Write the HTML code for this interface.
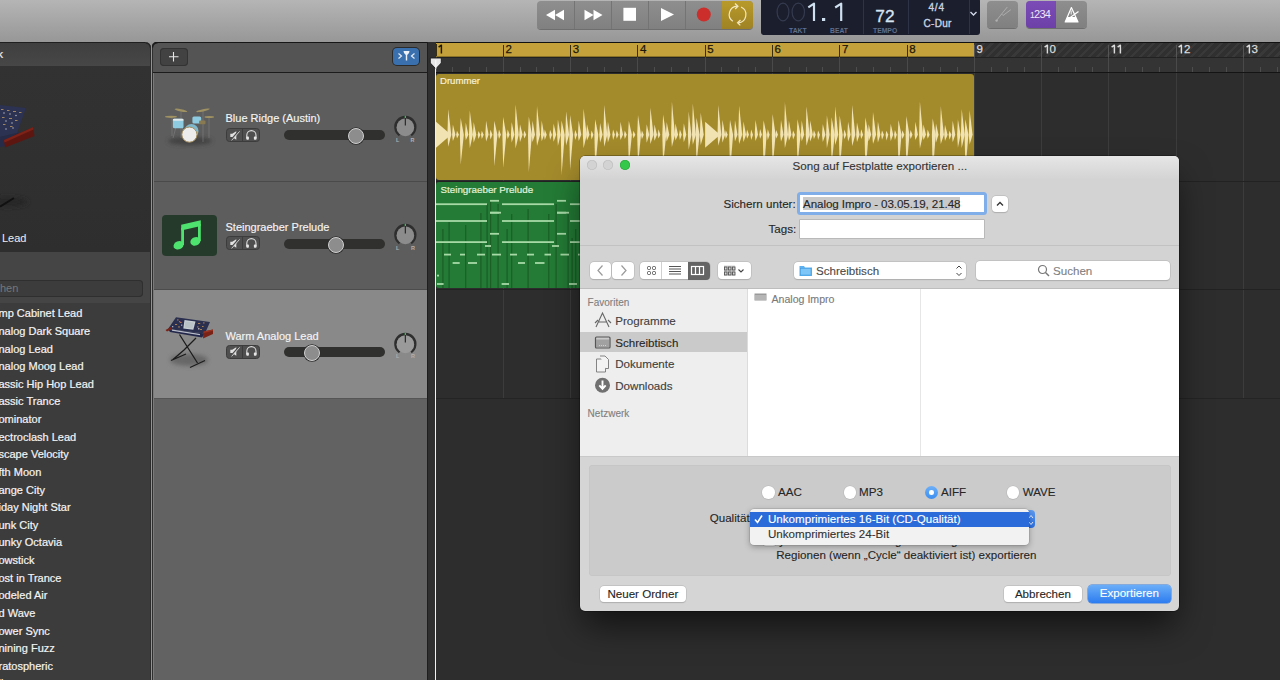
<!DOCTYPE html>
<html><head><meta charset="utf-8">
<style>
*{box-sizing:border-box;margin:0;padding:0}
html,body{width:1280px;height:680px;overflow:hidden;background:#2b2b2b;font-family:"Liberation Sans",sans-serif;position:relative}
.a{position:absolute}
#tb{left:0;top:0;width:1280px;height:42px;background:linear-gradient(#b5b5b5,#979797)}
.tbtn{position:absolute;top:1px;height:28px;background:linear-gradient(#8d8d8d,#7f7f7f);}
.rn{position:absolute;top:42px;font-size:11.5px;line-height:14px;-webkit-text-stroke:0.25px currentColor}
.li{position:absolute;left:-1.5px;font-size:11px;color:#f4f4f4;line-height:13px;white-space:nowrap;-webkit-text-stroke:0.2px #f4f4f4}
.tname{position:absolute;left:225.5px;font-size:11px;color:#f4f4f4;white-space:nowrap;line-height:13px;-webkit-text-stroke:0.15px #f4f4f4}
.ms{position:absolute;left:226px;width:33.5px;height:14px;border:1px solid #3c3c3c;border-radius:3.5px;background:#4f4f4f}
.ms:after{content:"";position:absolute;left:14.8px;top:0;width:1px;height:12px;background:#3c3c3c}
.sl{position:absolute;left:284px;width:100.5px;height:10px;border-radius:5px;background:#30312f}
.th{position:absolute;width:16px;height:16px;border-radius:50%;background:#8d8d8d;border:1.3px solid #d0d0d0;box-shadow:0 0 0 0.8px #2e2e2e;margin-top:0.6px}
.kn{position:absolute;left:394px;width:23px;height:23px}
.lr{position:absolute;font-size:5.5px;color:#b0b0b0;font-weight:bold}
.dt{font-size:11.6px;color:#262626;position:absolute;white-space:nowrap;line-height:14px;-webkit-text-stroke:0.12px currentColor}
.btn{position:absolute;height:17px;border-radius:4px;background:#fff;box-shadow:0 0 0 0.5px #b5b5b5,0 0.5px 1px rgba(0,0,0,.2);font-size:11.6px;color:#262626;text-align:center;line-height:15.6px;-webkit-text-stroke:0.12px currentColor}
.radio{position:absolute;width:12.5px;height:12.5px;border-radius:50%;background:#fff;box-shadow:0 0 0 0.5px #b8b8b8,0 0.5px 1px rgba(0,0,0,.15)}
</style></head><body>

<!-- toolbar -->
<div id="tb" class="a">
  <div class="a" style="left:537px;top:1px;width:216px;height:27.5px;border-radius:4px;background:linear-gradient(#8e8e8e,#808080);box-shadow:0 1px 0 #6e6e6e"></div>
  <div class="a" style="left:574px;top:1px;width:1px;height:27.5px;background:#747474"></div>
  <div class="a" style="left:611px;top:1px;width:1px;height:27.5px;background:#747474"></div>
  <div class="a" style="left:648px;top:1px;width:1px;height:27.5px;background:#747474"></div>
  <div class="a" style="left:685px;top:1px;width:1px;height:27.5px;background:#747474"></div>
  <div class="a" style="left:722px;top:1px;width:31px;height:27.5px;border-radius:0 4px 4px 0;background:linear-gradient(#b89a2a,#9f8224)"></div>
  <svg class="a" style="left:0;top:0" width="1280" height="42">
    <polygon points="546,15 555,9.7 555,20.3" fill="#fff"/><polygon points="555,15 564,9.7 564,20.3" fill="#fff"/>
    <polygon points="584.5,9.7 593.5,15 584.5,20.3" fill="#fff"/><polygon points="593.5,9.7 602.5,15 593.5,20.3" fill="#fff"/>
    <rect x="623.4" y="7.8" width="12.6" height="13" fill="#fff"/>
    <polygon points="661,8 674,14.5 661,21" fill="#fff"/>
    <circle cx="703.8" cy="14.5" r="7" fill="#cc2f2b"/>
    <path d="M732.8,21.3 A8.3,8.3 0 0 1 737.2,6.2" stroke="#f3e8c0" stroke-width="1.2" fill="none"/>
    <path d="M735,3.6 L737.9,6.2 L735.2,9" stroke="#f3e8c0" stroke-width="1.3" fill="none"/>
    <path d="M741.1,7.0 A8.3,8.3 0 0 1 738.2,22.8" stroke="#f3e8c0" stroke-width="1.2" fill="none"/>
    <path d="M740.5,20.1 L737.6,22.8 L740.3,25.4" stroke="#f3e8c0" stroke-width="1.3" fill="none"/>
  </svg>
  <!-- LCD -->
  <div class="a" style="left:761px;top:-2px;width:218.5px;height:36.7px;border-radius:3px;background:#1b1e2c"></div>
  <div class="a" style="left:862.5px;top:0;width:1px;height:34px;background:#2e3448"></div>
  <div class="a" style="left:907.5px;top:0;width:1px;height:34px;background:#2e3448"></div>
  <div class="a" style="left:968.5px;top:0;width:1px;height:34px;background:#2e3448"></div>
  <svg class="a" style="left:760px;top:0" width="100" height="36">
    <ellipse cx="23" cy="12" rx="5.9" ry="8.8" fill="none" stroke="#353b4f" stroke-width="1.2"/>
    <ellipse cx="38.3" cy="12" rx="6.2" ry="8.8" fill="none" stroke="#353b4f" stroke-width="1.2"/>
    <path d="M48.3,7.3 L54,3.6 V21" fill="none" stroke="#cfe0f0" stroke-width="2.2" stroke-linejoin="round"/>
    <rect x="62" y="18" width="3.2" height="3" fill="#cfe0f0"/>
    <path d="M75.2,7.5 L81.2,3.6 V21" fill="none" stroke="#cfe0f0" stroke-width="2.2" stroke-linejoin="round"/>
  </svg>
  <div class="a" style="left:789px;top:27px;font-size:6.8px;font-weight:bold;color:#5f6f8e;line-height:7px">TAKT</div>
  <div class="a" style="left:830px;top:27px;font-size:6.8px;font-weight:bold;color:#5f6f8e;line-height:7px">BEAT</div>
  <div class="a" style="left:873px;top:27px;font-size:6.8px;font-weight:bold;color:#5f6f8e;line-height:7px">TEMPO</div>
  <div class="a" style="left:875.3px;top:6px;font-size:17.3px;color:#d6e4f2;line-height:20px;-webkit-text-stroke:0.3px #d6e4f2">72</div>
  <div class="a" style="left:928.5px;top:1.5px;font-size:10px;letter-spacing:0.8px;color:#c8d4e2;line-height:12px;-webkit-text-stroke:0.35px #c8d4e2">4/4</div>
  <div class="a" style="left:923.5px;top:17.5px;font-size:10px;letter-spacing:0.3px;color:#c8d4e2;line-height:12px;-webkit-text-stroke:0.35px #c8d4e2">C-Dur</div>
  <svg class="a" style="left:968px;top:10px" width="12" height="8"><path d="M2.5,2 L5.5,5 L8.5,2" stroke="#d0d8e8" stroke-width="1.4" fill="none"/></svg>
  <!-- tuner -->
  <div class="a" style="left:987.3px;top:1px;width:30.7px;height:27px;border-radius:4px;background:linear-gradient(#8e8e8e,#808080);box-shadow:0 1px 0 #6e6e6e"></div>
  <svg class="a" style="left:980px;top:0px" width="40" height="28">
    <path d="M16.4,20.6 L21.6,14 L27.3,7 M21.6,14 L23,15.5 L30.8,9.7" stroke="#b0b0b0" stroke-width="0.9" fill="none"/><circle cx="16.6" cy="20.6" r="1.2" fill="#b0b0b0"/>
  </svg>
  <div class="a" style="left:1026px;top:1px;width:60.8px;height:27px;border-radius:4px;background:linear-gradient(#8e8e8e,#808080);box-shadow:0 1px 0 #6e6e6e"></div>
  <div class="a" style="left:1026px;top:1px;width:30px;height:27px;border-radius:4px 0 0 4px;background:linear-gradient(#7b4cb6,#6d40a8)"></div>
  <div class="a" style="left:1030px;top:8px;font-size:11px;color:#efe6f8;line-height:12px;letter-spacing:-0.7px"><span style="font-size:8.5px">1</span>234</div>
  <svg class="a" style="left:1056px;top:0px" width="31" height="28">
    <path d="M15.4,7.5 L9.2,22 H22 Z" fill="none" stroke="#fff" stroke-width="1.2" stroke-linejoin="round"/>
    <polygon points="11.3,17 19.9,17 22,22 9.2,22" fill="#fff"/>
    <path d="M15.2,10.5 V14.5" stroke="#fff" stroke-width="0.9"/>
    <path d="M13.5,18 L22.5,11.5" stroke="#fff" stroke-width="1.2"/>
  </svg>
</div>

<!-- left library panel -->
<div class="a" style="left:0;top:42px;width:150.5px;height:638px;background:#3d3d3d;border-top:1px solid #1f1f1f"></div>
<div class="a" style="left:0;top:43px;width:149.7px;height:24px;background:linear-gradient(#3f3f3f,#474747);border-bottom:1.2px solid #2a2a2a;border-radius:0 4px 0 0"></div>
<div class="a" style="left:-2.6px;top:47.5px;font-size:11px;color:#eee;line-height:13px;-webkit-text-stroke:0.2px #eee">k</div>
<div class="a" style="left:0;top:66px;width:150px;height:186px;background:linear-gradient(#323232,#2e2e2e)"></div>
<svg class="a" style="left:0;top:90px" width="60" height="130">
  <polygon points="0,15 26,18 17,43 0,47" fill="#2b3252"/>
  <g fill="#b89460" opacity=".85"><rect x="1" y="19" width="2.5" height="1"/><rect x="7" y="20" width="2.5" height="1"/><rect x="13" y="21" width="3" height="1"/><rect x="19" y="22" width="2.5" height="1"/><rect x="2" y="27" width="2.5" height="1"/><rect x="9" y="28" width="3" height="1"/><rect x="15" y="30" width="2.5" height="1"/><rect x="3" y="34" width="2.5" height="1"/><rect x="10" y="36" width="2.5" height="1"/></g>
  <g fill="#c8c8d0" opacity=".8"><circle cx="4" cy="23" r="0.8"/><circle cx="10" cy="24" r="0.8"/><circle cx="16" cy="25.5" r="0.8"/><circle cx="6" cy="31" r="0.8"/><circle cx="12" cy="33" r="0.8"/><circle cx="6" cy="39" r="0.8"/><circle cx="13" cy="38" r="0.8"/></g>
  <polygon points="0,47 17,43 22,40 6,56 0,57" fill="#262c48"/>
  <polygon points="4,50 33,37.3 34.5,46 5,57.4" fill="#5e1610"/>
  <polygon points="4,50 33,37.3 33.5,39.5 4.5,52.5" fill="#7e2218"/>
  <ellipse cx="8" cy="112" rx="20" ry="5" fill="#262626" filter="url(#bl)"/>
  <path d="M0,116.6 L14,108" stroke="#111" stroke-width="2"/>
</svg>
<div class="a" style="left:2px;top:232px;font-size:11px;color:#eee;line-height:13px">Lead</div>
<div class="a" style="left:0;top:252px;width:150px;height:51px;background:#454545"></div>
<div class="a" style="left:-6px;top:279.6px;width:148.6px;height:17px;border-radius:4px;background:#3c3c3c;box-shadow:inset 0 0 0 1px #2f2f2f"></div>
<div class="a" style="left:0;top:281.5px;font-size:11px;color:#777;line-height:13px">hen</div>
<div class="a" style="left:0;top:303px;width:150px;height:377px;background:#3c3c3c"></div>
<div class="li" style="top:307.3px">mp Cabinet Lead</div><div class="li" style="top:324.9px">nalog Dark Square</div><div class="li" style="top:342.5px">nalog Lead</div><div class="li" style="top:360.2px">nalog Moog Lead</div><div class="li" style="top:377.8px">assic Hip Hop Lead</div><div class="li" style="top:395.4px">assic Trance</div><div class="li" style="top:413.0px">ominator</div><div class="li" style="top:430.6px">ectroclash Lead</div><div class="li" style="top:448.3px">scape Velocity</div><div class="li" style="top:465.9px">fth Moon</div><div class="li" style="top:483.5px">ange City</div><div class="li" style="top:501.1px">iday Night Star</div><div class="li" style="top:518.7px">unk City</div><div class="li" style="top:536.4px">unky Octavia</div><div class="li" style="top:554.0px">owstick</div><div class="li" style="top:571.6px">ost in Trance</div><div class="li" style="top:589.2px">odeled Air</div><div class="li" style="top:606.8px">d Wave</div><div class="li" style="top:624.5px">ower Sync</div><div class="li" style="top:642.1px">nining Fuzz</div><div class="li" style="top:659.7px">ratospheric</div><div class="li" style="top:677.3px">ll</div>
<div class="a" style="left:149.7px;top:42px;width:1.1px;height:638px;background:#2c2c2c"></div><div class="a" style="left:150.8px;top:42px;width:1.3px;height:638px;background:#929292"></div><div class="a" style="left:152.1px;top:42px;width:0.9px;height:638px;background:#2f2f2f"></div>

<svg class="a" style="left:0;top:0;z-index:5" width="170" height="60">
  <path d="M145.7,41.5 H151 V47.5 A5,5 0 0 0 145.7,42.5 Z" fill="#979797"/>
  <path d="M145.7,43 A4.3,4.3 0 0 1 150.2,47.5" stroke="#262626" stroke-width="1.3" fill="none"/>
  <path d="M151.8,41.5 H157.6 A5,5 0 0 0 151.8,47.5 Z" fill="#979797"/>
  <path d="M152.6,47.5 A4.6,4.6 0 0 1 157.6,42.9" stroke="#1a1a1a" stroke-width="1.3" fill="none"/>
</svg>
<!-- track header panel -->
<div class="a" style="left:153px;top:42px;width:274px;height:638px;background:#626262"></div>
<div class="a" style="left:153px;top:42px;width:274px;height:31px;background:#545454;border-top:1.5px solid #161616;border-bottom:1.5px solid #1c1c1c;border-radius:3px 0 0 0"></div>
<div class="a" style="left:160px;top:48px;width:27.5px;height:17.6px;border-radius:4px;background:#424242;box-shadow:inset 0 0 0 1px #333"></div>
<svg class="a" style="left:160px;top:48px" width="28" height="18"><path d="M13.5,4 V13.5 M9,8.7 H18.5" stroke="#e6e6e6" stroke-width="1.1"/></svg>
<div class="a" style="left:392.8px;top:48.4px;width:26.2px;height:16.6px;border-radius:4px;background:#3a70ad;box-shadow:0 0 0 1px #2b2b2b"></div>
<svg class="a" style="left:392.8px;top:48.4px" width="27" height="17">
  <path d="M5.5,5.5 L8.5,8 L5.5,10.5" stroke="#e6ecf5" stroke-width="1.2" fill="none"/>
  <path d="M21.5,5.5 L18.5,8 L21.5,10.5" stroke="#e6ecf5" stroke-width="1.2" fill="none"/>
  <polygon points="10.5,3 16.5,3 16,5 14.2,7 14.2,12.5 12.8,12.5 12.8,7 11,5" fill="#eef2f8"/>
</svg>
<!-- track 1 -->
<div class="a" style="left:153px;top:73px;width:274px;height:108px;background:#5d5d5d"></div>
<div class="a" style="left:153px;top:181px;width:274px;height:1px;background:#4a4a4a"></div>
<!-- track 2 -->
<div class="a" style="left:153px;top:182px;width:274px;height:107px;background:#5d5d5d"></div>
<div class="a" style="left:153px;top:288.5px;width:274px;height:1px;background:#4c4c4c"></div>
<!-- track 3 selected -->
<div class="a" style="left:153px;top:289.5px;width:274px;height:108px;background:#898989"></div>
<div class="a" style="left:153px;top:397.5px;width:274px;height:1.2px;background:#555"></div>
<div class="a" style="left:153px;top:73px;width:1px;height:607px;background:#7a7a7a"></div>

<!-- drums icon -->
<svg class="a" style="left:160px;top:100px" width="60" height="50">
  <defs><filter id="bl" x="-50%" y="-50%" width="200%" height="200%"><feGaussianBlur stdDeviation="2"/></filter></defs>
  <ellipse cx="30" cy="41" rx="22" ry="4" fill="#3a3a3a" filter="url(#bl)" opacity=".8"/>
  <g stroke="#858585" stroke-width="0.55"><path d="M21,10 V38 M43,10 V42 M49,17 V38 M12,17 V36 M16,27 L13,38 M22,27 L26,39"/></g>
  <ellipse cx="21" cy="10.3" rx="6.5" ry="1.15" fill="#9f9162" transform="rotate(12 21 10.3)"/>
  <ellipse cx="43" cy="10.3" rx="7" ry="1.15" fill="#9f9162" transform="rotate(-12 43 10.3)"/>
  <ellipse cx="11" cy="16.8" rx="6" ry="1.1" fill="#9f9162"/>
  <ellipse cx="49.3" cy="17" rx="4.8" ry="1.05" fill="#9f9162"/>
  <rect x="12.9" y="18.7" width="10.6" height="9.5" rx="1.5" fill="#8ecbe0"/>
  <rect x="12.9" y="18.7" width="10.6" height="2" rx="1" fill="#dfe8ea"/>
  <rect x="32.4" y="16.5" width="8.8" height="7" rx="1.5" fill="#8ecbe0"/>
  <rect x="39" y="20.5" width="6.5" height="3.8" rx="1" fill="#8a7a52"/>
  <circle cx="31.5" cy="31" r="7" fill="#7fb8cc"/>
  <circle cx="29.4" cy="34.6" r="7.6" fill="#ececec" stroke="#a08a5a" stroke-width="1"/>
</svg>
<div class="tname" style="top:112px">Blue Ridge (Austin)</div>
<div class="ms" style="top:128.2px"></div>
<div class="sl" style="top:130px"></div>
<div class="th" style="left:348px;top:127.4px"></div>
<svg class="a" style="left:390px;top:109.90px" width="32" height="32"><g transform="translate(15.35,17)">
<path d="M-5.68,8.11 A9.9,9.9 0 1 1 5.68,8.11" fill="none" stroke="#2e2e2e" stroke-width="2.5"/>
<circle cx="0" cy="0.4" r="8.8" fill="#8c8c8c"/>
<path d="M0,-1.4 V-9" stroke="#2a2a2a" stroke-width="1.2"/>
<path d="M0,-9 V-11.2" stroke="#3bbf55" stroke-width="1.3"/></g></svg>
<div class="lr" style="left:396px;top:136.5px">L</div><div class="lr" style="left:410.5px;top:136.5px">R</div>

<!-- note icon -->
<div class="a" style="left:162px;top:215.2px;width:54.7px;height:40.4px;border-radius:4px;background:#253a2b"></div>
<svg class="a" style="left:162px;top:215px" width="55" height="41">
  <path d="M20.6,13 V30 M37.4,9 V26" stroke="#4ee36e" stroke-width="2.8"/>
  <polygon points="19.2,9.8 38.8,5.3 38.8,11 19.2,15.5" fill="#4ee36e"/>
  <ellipse cx="16.6" cy="30.2" rx="5.2" ry="4.1" fill="#4ee36e" transform="rotate(-22 16.6 30.2)"/>
  <ellipse cx="33.4" cy="26.4" rx="5.2" ry="4.1" fill="#4ee36e" transform="rotate(-22 33.4 26.4)"/>
</svg>
<div class="tname" style="top:221px">Steingraeber Prelude</div>
<div class="ms" style="top:236.4px"></div>
<div class="sl" style="top:238.5px"></div>
<div class="th" style="left:328px;top:236px"></div>
<svg class="a" style="left:390px;top:218.40px" width="32" height="32"><g transform="translate(15.35,17)">
<path d="M-5.68,8.11 A9.9,9.9 0 1 1 5.68,8.11" fill="none" stroke="#2e2e2e" stroke-width="2.5"/>
<circle cx="0" cy="0.4" r="8.8" fill="#8c8c8c"/>
<path d="M0,-1.4 V-9" stroke="#2a2a2a" stroke-width="1.2"/>
<path d="M0,-9 V-11.2" stroke="#3bbf55" stroke-width="1.3"/></g></svg>
<div class="lr" style="left:396px;top:245px">L</div><div class="lr" style="left:411px;top:245px">R</div>

<!-- keyboard icon -->
<svg class="a" style="left:160px;top:310px" width="60" height="62">
  <ellipse cx="29" cy="50" rx="19" ry="6" fill="#5a5a5a" filter="url(#bl)" opacity=".7"/>
  <g stroke="#1c1c1c" stroke-width="1.3" fill="none"><path d="M19.5,24.5 L37.5,53 M36,28 L24,40 L13,49.5 M11,50.5 L26,44 M30,57.5 L45,50.5"/></g>
  <polygon points="16,7.2 50,12 45,23.5 8,19" fill="#2a2f50"/>
  <polygon points="8,19 45,23.5 42,27.5 10,22" fill="#23284a"/>
  <path d="M12,20.2 L40,24.6" stroke="#b8bcc8" stroke-width="1.2"/>
  <polygon points="24.5,10 35.5,11.5 33.3,19.8 23.3,18.4" fill="#c9d0d4"/>
  <polygon points="25.5,11.5 34,12.6 32.5,18.5 24.5,17.4" fill="#aab4b8" opacity=".5"/>
  <g fill="#b88a50"><rect x="17" y="9.5" width="1.6" height="0.9"/><rect x="20" y="12" width="1.6" height="0.9"/><rect x="38" y="13" width="2.2" height="0.9"/><rect x="42" y="16" width="1.6" height="0.9"/><rect x="15" y="14" width="2.2" height="0.9"/><rect x="43" y="12.5" width="1.6" height="0.9"/><rect x="18" y="16.5" width="2" height="0.9"/><rect x="40" y="19" width="2" height="0.9"/><rect x="37" y="16.5" width="1.6" height="0.9"/></g>
  <g fill="#c8c8d0" opacity=".8"><rect x="38" y="18" width="1.5" height="1.5"/><rect x="12" y="16" width="1.3" height="1.3"/><rect x="21" y="14.5" width="1.3" height="1.3"/></g>
  <rect x="19" y="11" width="1.3" height="1.3" fill="#d84a6a"/>
  <polygon points="43.5,21.5 53,19.5 53,24 43,28.5" fill="#7a2216"/>
  <polygon points="43.5,21.5 53,19.5 53,20.8 43.5,23" fill="#9a3424"/>
  <polygon points="5.5,20 11,17 12,19 7,21.5" fill="#7a2216"/>
</svg>
<div class="tname" style="top:329.5px">Warm Analog Lead</div>
<div class="ms" style="top:344.5px"></div>
<div class="sl" style="top:346.5px"></div>
<div class="th" style="left:304px;top:344px"></div>
<svg class="a" style="left:390px;top:326.80px" width="32" height="32"><g transform="translate(15.35,17)">
<path d="M-5.68,8.11 A9.9,9.9 0 1 1 5.68,8.11" fill="none" stroke="#2e2e2e" stroke-width="2.5"/>
<circle cx="0" cy="0.4" r="8.8" fill="#9a9a9a"/>
<path d="M0,-1.4 V-9" stroke="#2a2a2a" stroke-width="1.2"/>
<path d="M0,-9 V-11.2" stroke="#3bbf55" stroke-width="1.3"/></g></svg>
<div class="lr" style="left:396px;top:353px">L</div><div class="lr" style="left:411px;top:353px">R</div>

<!-- mute/solo glyphs -->
<svg class="a" style="left:225px;top:128px" width="36" height="16">
  <path d="M5.3,5.8 H7.2 L11.3,3.2 V11.8 L7.2,9 H5.3 Z" fill="#e2e2e2"/><path d="M5.6,12.2 L13.6,3.2" stroke="#4e4e4e" stroke-width="1.5"/><path d="M6.6,12.4 L14.6,3.4" stroke="#d8d8d8" stroke-width="0.9"/>
  <path d="M21.8,10.5 V7.2 A4.6,4.6 0 0 1 31,7.2 V10.5" stroke="#dcdcdc" stroke-width="1.1" fill="none"/><rect x="21.3" y="8.6" width="2.6" height="3.2" rx="0.8" fill="#e6e6e6"/><rect x="28.9" y="8.6" width="2.6" height="3.2" rx="0.8" fill="#e6e6e6"/>
</svg>
<svg class="a" style="left:225px;top:236px" width="36" height="16">
  <path d="M5.3,5.8 H7.2 L11.3,3.2 V11.8 L7.2,9 H5.3 Z" fill="#e2e2e2"/><path d="M5.6,12.2 L13.6,3.2" stroke="#4e4e4e" stroke-width="1.5"/><path d="M6.6,12.4 L14.6,3.4" stroke="#d8d8d8" stroke-width="0.9"/>
  <path d="M21.8,10.5 V7.2 A4.6,4.6 0 0 1 31,7.2 V10.5" stroke="#dcdcdc" stroke-width="1.1" fill="none"/><rect x="21.3" y="8.6" width="2.6" height="3.2" rx="0.8" fill="#e6e6e6"/><rect x="28.9" y="8.6" width="2.6" height="3.2" rx="0.8" fill="#e6e6e6"/>
</svg>
<svg class="a" style="left:225px;top:344px" width="36" height="16">
  <path d="M5.3,5.8 H7.2 L11.3,3.2 V11.8 L7.2,9 H5.3 Z" fill="#e2e2e2"/><path d="M5.6,12.2 L13.6,3.2" stroke="#4e4e4e" stroke-width="1.5"/><path d="M6.6,12.4 L14.6,3.4" stroke="#d8d8d8" stroke-width="0.9"/>
  <path d="M21.8,10.5 V7.2 A4.6,4.6 0 0 1 31,7.2 V10.5" stroke="#dcdcdc" stroke-width="1.1" fill="none"/><rect x="21.3" y="8.6" width="2.6" height="3.2" rx="0.8" fill="#e6e6e6"/><rect x="28.9" y="8.6" width="2.6" height="3.2" rx="0.8" fill="#e6e6e6"/>
</svg>

<!-- strip -->
<div class="a" style="left:427px;top:42px;width:9px;height:638px;background:#2f2f2f;border-left:1px solid #1e1e1e"></div>

<!-- ruler -->
<div class="a" style="left:436px;top:42px;width:844px;height:31px;background:#343434;border-top:1px solid #111"></div>
<div class="a" style="left:974px;top:43px;width:306px;height:14px;background:repeating-linear-gradient(135deg,#393939 0 2.2px,#303030 2.2px 6px)"></div>
<div class="a" style="left:436px;top:43px;width:538px;height:14px;background:#c4a13b;border-bottom:1px solid #8a7228"></div>
<div class="a" style="left:436px;top:57px;width:844px;height:1px;background:#222"></div>
<div class="rn" style="left:438.2px;color:#1c180a"><svg width="5.2" height="10" style="vertical-align:-1px;margin-right:0.6px"><path d="M0.6,3.2 L3.4,1.2 V9.4" stroke="#1c180a" stroke-width="1.45" fill="none" stroke-linejoin="round"/></svg></div><div style="position:absolute;left:435.5px;top:44px;width:1px;height:12px;background:#3a3010"></div><div style="position:absolute;left:435.5px;top:57px;width:1px;height:15px;background:#4a4a4a"></div><div style="position:absolute;left:452.3px;top:66.5px;width:1px;height:5px;background:#4d4d4d"></div><div style="position:absolute;left:469.1px;top:66.5px;width:1px;height:5px;background:#4d4d4d"></div><div style="position:absolute;left:486.0px;top:66.5px;width:1px;height:5px;background:#4d4d4d"></div><div class="rn" style="left:505.5px;color:#1c180a">2</div><div style="position:absolute;left:502.8px;top:45px;width:1px;height:12px;background:#3a3010"></div><div style="position:absolute;left:502.8px;top:57px;width:1px;height:15px;background:#4a4a4a"></div><div style="position:absolute;left:519.6px;top:66.5px;width:1px;height:5px;background:#4d4d4d"></div><div style="position:absolute;left:536.4px;top:66.5px;width:1px;height:5px;background:#4d4d4d"></div><div style="position:absolute;left:553.2px;top:66.5px;width:1px;height:5px;background:#4d4d4d"></div><div class="rn" style="left:572.8px;color:#1c180a">3</div><div style="position:absolute;left:570.1px;top:45px;width:1px;height:12px;background:#3a3010"></div><div style="position:absolute;left:570.1px;top:57px;width:1px;height:15px;background:#4a4a4a"></div><div style="position:absolute;left:586.9px;top:66.5px;width:1px;height:5px;background:#4d4d4d"></div><div style="position:absolute;left:603.7px;top:66.5px;width:1px;height:5px;background:#4d4d4d"></div><div style="position:absolute;left:620.5px;top:66.5px;width:1px;height:5px;background:#4d4d4d"></div><div class="rn" style="left:640.0px;color:#1c180a">4</div><div style="position:absolute;left:637.3px;top:45px;width:1px;height:12px;background:#3a3010"></div><div style="position:absolute;left:637.3px;top:57px;width:1px;height:15px;background:#4a4a4a"></div><div style="position:absolute;left:654.2px;top:66.5px;width:1px;height:5px;background:#4d4d4d"></div><div style="position:absolute;left:671.0px;top:66.5px;width:1px;height:5px;background:#4d4d4d"></div><div style="position:absolute;left:687.8px;top:66.5px;width:1px;height:5px;background:#4d4d4d"></div><div class="rn" style="left:707.3px;color:#1c180a">5</div><div style="position:absolute;left:704.6px;top:45px;width:1px;height:12px;background:#3a3010"></div><div style="position:absolute;left:704.6px;top:57px;width:1px;height:15px;background:#4a4a4a"></div><div style="position:absolute;left:721.4px;top:66.5px;width:1px;height:5px;background:#4d4d4d"></div><div style="position:absolute;left:738.3px;top:66.5px;width:1px;height:5px;background:#4d4d4d"></div><div style="position:absolute;left:755.1px;top:66.5px;width:1px;height:5px;background:#4d4d4d"></div><div class="rn" style="left:774.6px;color:#1c180a">6</div><div style="position:absolute;left:771.9px;top:45px;width:1px;height:12px;background:#3a3010"></div><div style="position:absolute;left:771.9px;top:57px;width:1px;height:15px;background:#4a4a4a"></div><div style="position:absolute;left:788.7px;top:66.5px;width:1px;height:5px;background:#4d4d4d"></div><div style="position:absolute;left:805.5px;top:66.5px;width:1px;height:5px;background:#4d4d4d"></div><div style="position:absolute;left:822.4px;top:66.5px;width:1px;height:5px;background:#4d4d4d"></div><div class="rn" style="left:841.9px;color:#1c180a">7</div><div style="position:absolute;left:839.2px;top:45px;width:1px;height:12px;background:#3a3010"></div><div style="position:absolute;left:839.2px;top:57px;width:1px;height:15px;background:#4a4a4a"></div><div style="position:absolute;left:856.0px;top:66.5px;width:1px;height:5px;background:#4d4d4d"></div><div style="position:absolute;left:872.8px;top:66.5px;width:1px;height:5px;background:#4d4d4d"></div><div style="position:absolute;left:889.6px;top:66.5px;width:1px;height:5px;background:#4d4d4d"></div><div class="rn" style="left:909.2px;color:#1c180a">8</div><div style="position:absolute;left:906.5px;top:45px;width:1px;height:12px;background:#3a3010"></div><div style="position:absolute;left:906.5px;top:57px;width:1px;height:15px;background:#4a4a4a"></div><div style="position:absolute;left:923.3px;top:66.5px;width:1px;height:5px;background:#4d4d4d"></div><div style="position:absolute;left:940.1px;top:66.5px;width:1px;height:5px;background:#4d4d4d"></div><div style="position:absolute;left:956.9px;top:66.5px;width:1px;height:5px;background:#4d4d4d"></div><div class="rn" style="left:976.4px;color:#dcdcdc">9</div><div style="position:absolute;left:973.7px;top:45px;width:1px;height:12px;background:#555"></div><div style="position:absolute;left:973.7px;top:57px;width:1px;height:15px;background:#4a4a4a"></div><div style="position:absolute;left:990.6px;top:66.5px;width:1px;height:5px;background:#4d4d4d"></div><div style="position:absolute;left:1007.4px;top:66.5px;width:1px;height:5px;background:#4d4d4d"></div><div style="position:absolute;left:1024.2px;top:66.5px;width:1px;height:5px;background:#4d4d4d"></div><div class="rn" style="left:1043.7px;color:#dcdcdc"><svg width="5.2" height="10" style="vertical-align:-1px;margin-right:0.6px"><path d="M0.6,3.2 L3.4,1.2 V9.4" stroke="#dcdcdc" stroke-width="1.45" fill="none" stroke-linejoin="round"/></svg>0</div><div style="position:absolute;left:1041.0px;top:45px;width:1px;height:12px;background:#555"></div><div style="position:absolute;left:1041.0px;top:57px;width:1px;height:15px;background:#4a4a4a"></div><div style="position:absolute;left:1057.8px;top:66.5px;width:1px;height:5px;background:#4d4d4d"></div><div style="position:absolute;left:1074.7px;top:66.5px;width:1px;height:5px;background:#4d4d4d"></div><div style="position:absolute;left:1091.5px;top:66.5px;width:1px;height:5px;background:#4d4d4d"></div><div class="rn" style="left:1111.0px;color:#dcdcdc"><svg width="5.2" height="10" style="vertical-align:-1px;margin-right:0.6px"><path d="M0.6,3.2 L3.4,1.2 V9.4" stroke="#dcdcdc" stroke-width="1.45" fill="none" stroke-linejoin="round"/></svg><svg width="5.2" height="10" style="vertical-align:-1px;margin-right:0.6px"><path d="M0.6,3.2 L3.4,1.2 V9.4" stroke="#dcdcdc" stroke-width="1.45" fill="none" stroke-linejoin="round"/></svg></div><div style="position:absolute;left:1108.3px;top:45px;width:1px;height:12px;background:#555"></div><div style="position:absolute;left:1108.3px;top:57px;width:1px;height:15px;background:#4a4a4a"></div><div style="position:absolute;left:1125.1px;top:66.5px;width:1px;height:5px;background:#4d4d4d"></div><div style="position:absolute;left:1141.9px;top:66.5px;width:1px;height:5px;background:#4d4d4d"></div><div style="position:absolute;left:1158.8px;top:66.5px;width:1px;height:5px;background:#4d4d4d"></div><div class="rn" style="left:1178.3px;color:#dcdcdc"><svg width="5.2" height="10" style="vertical-align:-1px;margin-right:0.6px"><path d="M0.6,3.2 L3.4,1.2 V9.4" stroke="#dcdcdc" stroke-width="1.45" fill="none" stroke-linejoin="round"/></svg>2</div><div style="position:absolute;left:1175.6px;top:45px;width:1px;height:12px;background:#555"></div><div style="position:absolute;left:1175.6px;top:57px;width:1px;height:15px;background:#4a4a4a"></div><div style="position:absolute;left:1192.4px;top:66.5px;width:1px;height:5px;background:#4d4d4d"></div><div style="position:absolute;left:1209.2px;top:66.5px;width:1px;height:5px;background:#4d4d4d"></div><div style="position:absolute;left:1226.0px;top:66.5px;width:1px;height:5px;background:#4d4d4d"></div><div class="rn" style="left:1245.6px;color:#dcdcdc"><svg width="5.2" height="10" style="vertical-align:-1px;margin-right:0.6px"><path d="M0.6,3.2 L3.4,1.2 V9.4" stroke="#dcdcdc" stroke-width="1.45" fill="none" stroke-linejoin="round"/></svg>3</div><div style="position:absolute;left:1242.9px;top:45px;width:1px;height:12px;background:#555"></div><div style="position:absolute;left:1242.9px;top:57px;width:1px;height:15px;background:#4a4a4a"></div><div style="position:absolute;left:1259.7px;top:66.5px;width:1px;height:5px;background:#4d4d4d"></div><div style="position:absolute;left:1276.5px;top:66.5px;width:1px;height:5px;background:#4d4d4d"></div><div style="position:absolute;left:1293.3px;top:66.5px;width:1px;height:5px;background:#4d4d4d"></div>
<div class="a" style="left:436px;top:71.5px;width:844px;height:1.8px;background:#141414"></div>

<!-- lanes -->
<div class="a" style="left:436px;top:73px;width:844px;height:607px;background:#2d2d2d"></div>
<div style="position:absolute;left:502.8px;top:73px;width:1px;height:325px;background:#3c3c3c"></div><div style="position:absolute;left:570.1px;top:73px;width:1px;height:325px;background:#3c3c3c"></div><div style="position:absolute;left:637.3px;top:73px;width:1px;height:325px;background:#3c3c3c"></div><div style="position:absolute;left:704.6px;top:73px;width:1px;height:325px;background:#3c3c3c"></div><div style="position:absolute;left:771.9px;top:73px;width:1px;height:325px;background:#3c3c3c"></div><div style="position:absolute;left:839.2px;top:73px;width:1px;height:325px;background:#3c3c3c"></div><div style="position:absolute;left:906.5px;top:73px;width:1px;height:325px;background:#3c3c3c"></div><div style="position:absolute;left:973.7px;top:73px;width:1px;height:325px;background:#3c3c3c"></div><div style="position:absolute;left:1041.0px;top:73px;width:1px;height:325px;background:#3c3c3c"></div><div style="position:absolute;left:1108.3px;top:73px;width:1px;height:325px;background:#3c3c3c"></div><div style="position:absolute;left:1175.6px;top:73px;width:1px;height:325px;background:#3c3c3c"></div><div style="position:absolute;left:1242.9px;top:73px;width:1px;height:325px;background:#3c3c3c"></div>
<div class="a" style="left:436px;top:181px;width:844px;height:1px;background:#222"></div>
<div class="a" style="left:436px;top:289px;width:844px;height:1px;background:#222"></div>
<div class="a" style="left:436px;top:397.5px;width:844px;height:1.2px;background:#242424"></div>

<!-- drummer region -->
<div class="a" style="left:436.3px;top:74px;width:538px;height:106px;background:#a38a2b;border-radius:3px"></div>
<div class="a" style="left:440px;top:75.2px;font-size:9.6px;color:#f8f1d8;line-height:11px;-webkit-text-stroke:0.2px #f8f1d8">Drummer</div>
<svg class="a" style="left:0;top:0" width="1280" height="200" fill="#f2e3b2"><polygon points="436.0,121.7 451.0,134.7 436.0,147.7"/><polygon points="705.1,121.7 720.1,134.7 705.1,147.7"/><polygon points="447.4,134.7 448.2,109.2 451.3,134.7 448.2,146.8"/><polygon points="452.1,134.7 452.9,124.6 455.4,134.7 452.9,141.0"/><polygon points="456.2,134.7 457.0,130.8 458.9,134.7 457.0,138.5"/><polygon points="459.9,134.7 460.7,118.1 463.8,134.7 460.7,164.6"/><polygon points="465.0,134.7 465.8,122.7 468.4,134.7 465.8,140.3"/><polygon points="469.0,134.7 469.8,110.4 472.9,134.7 469.8,148.2"/><polygon points="472.9,134.7 473.7,121.9 476.3,134.7 473.7,142.7"/><polygon points="477.7,134.7 478.5,130.9 480.4,134.7 478.5,139.0"/><polygon points="481.0,134.7 481.8,130.7 483.7,134.7 481.8,139.1"/><polygon points="485.3,134.7 486.1,120.7 488.6,134.7 486.1,141.6"/><polygon points="489.7,134.7 490.5,129.7 492.4,134.7 490.5,139.5"/><polygon points="493.5,134.7 494.3,120.7 497.4,134.7 494.3,166.3"/><polygon points="498.2,134.7 499.0,129.6 500.9,134.7 499.0,139.1"/><polygon points="502.4,134.7 503.2,117.0 506.3,134.7 503.2,167.8"/><polygon points="506.9,134.7 507.7,129.4 509.6,134.7 507.7,138.9"/><polygon points="510.9,134.7 511.7,122.0 514.3,134.7 511.7,142.4"/><polygon points="514.8,134.7 515.6,104.5 518.7,134.7 515.6,148.4"/><polygon points="519.2,134.7 520.0,124.3 522.6,134.7 520.0,142.1"/><polygon points="523.5,134.7 524.3,130.6 526.2,134.7 524.3,138.5"/><polygon points="528.0,134.7 528.8,116.4 531.9,134.7 528.8,171.9"/><polygon points="531.7,134.7 532.5,120.4 535.0,134.7 532.5,141.9"/><polygon points="536.2,134.7 537.0,106.1 540.1,134.7 537.0,145.9"/><polygon points="540.9,134.7 541.7,120.6 544.2,134.7 541.7,141.3"/><polygon points="544.0,134.7 544.8,129.6 546.7,134.7 544.8,139.9"/><polygon points="549.3,134.7 550.1,129.7 552.0,134.7 550.1,140.1"/><polygon points="552.8,134.7 553.6,123.5 556.2,134.7 553.6,141.8"/><polygon points="557.1,134.7 557.9,119.5 560.6,134.7 557.9,146.1"/><polygon points="560.8,134.7 561.6,120.4 564.7,134.7 561.6,174.9"/><polygon points="565.3,134.7 566.1,111.4 569.1,134.7 566.1,145.6"/><polygon points="569.3,134.7 570.1,114.9 573.1,134.7 570.1,170.0"/><polygon points="574.4,134.7 575.2,129.9 577.1,134.7 575.2,140.1"/><polygon points="577.9,134.7 578.7,120.5 581.3,134.7 578.7,141.1"/><polygon points="582.8,134.7 583.6,108.8 586.7,134.7 583.6,148.3"/><polygon points="586.2,134.7 587.0,124.2 589.5,134.7 587.0,140.6"/><polygon points="590.8,134.7 591.6,130.5 593.4,134.7 591.6,139.6"/><polygon points="594.4,134.7 595.2,119.3 598.3,134.7 595.2,169.6"/><polygon points="599.3,134.7 600.1,123.0 602.6,134.7 600.1,142.6"/><polygon points="603.4,134.7 604.2,104.9 607.3,134.7 604.2,146.7"/><polygon points="607.1,134.7 607.9,121.4 610.4,134.7 607.9,142.5"/><polygon points="612.3,134.7 613.1,129.4 614.9,134.7 613.1,140.0"/><polygon points="615.9,134.7 616.7,130.2 618.6,134.7 616.7,138.7"/><polygon points="619.7,134.7 620.5,121.7 623.0,134.7 620.5,140.1"/><polygon points="624.0,134.7 624.8,130.5 626.7,134.7 624.8,139.1"/><polygon points="628.0,134.7 628.8,120.8 631.9,134.7 628.8,165.5"/><polygon points="632.7,134.7 633.5,130.7 635.3,134.7 633.5,138.5"/><polygon points="637.2,134.7 638.0,114.9 641.0,134.7 638.0,165.5"/><polygon points="641.1,134.7 641.9,130.4 643.7,134.7 641.9,139.2"/><polygon points="645.9,134.7 646.7,124.3 649.2,134.7 646.7,142.7"/><polygon points="649.6,134.7 650.4,107.5 653.5,134.7 650.4,144.1"/><polygon points="653.7,134.7 654.5,124.4 657.0,134.7 654.5,140.7"/><polygon points="657.7,134.7 658.5,129.3 660.3,134.7 658.5,138.5"/><polygon points="662.3,134.7 663.1,114.4 666.2,134.7 663.1,165.4"/><polygon points="665.9,134.7 666.7,122.1 669.3,134.7 666.7,141.4"/><polygon points="671.1,134.7 671.9,101.6 675.0,134.7 671.9,147.0"/><polygon points="674.7,134.7 675.5,123.6 678.1,134.7 675.5,140.4"/><polygon points="679.1,134.7 679.9,129.4 681.8,134.7 679.9,140.0"/><polygon points="683.0,134.7 683.8,123.2 686.3,134.7 683.8,142.2"/><polygon points="687.9,134.7 688.7,111.8 691.4,134.7 688.7,149.7"/><polygon points="692.0,134.7 692.8,103.5 695.9,134.7 692.8,144.8"/><polygon points="695.7,134.7 696.5,117.5 699.6,134.7 696.5,163.6"/><polygon points="699.9,134.7 700.7,112.6 703.7,134.7 700.7,144.9"/><polygon points="717.5,134.7 718.3,104.9 721.3,134.7 718.3,145.8"/><polygon points="721.7,134.7 722.5,120.1 725.1,134.7 722.5,142.6"/><polygon points="725.0,134.7 725.8,130.2 727.7,134.7 725.8,138.9"/><polygon points="729.2,134.7 730.0,119.8 733.1,134.7 730.0,172.7"/><polygon points="734.2,134.7 735.0,120.3 737.5,134.7 735.0,141.3"/><polygon points="738.3,134.7 739.1,105.4 742.2,134.7 739.1,144.1"/><polygon points="742.7,134.7 743.5,121.5 746.0,134.7 743.5,142.1"/><polygon points="746.3,134.7 747.1,129.4 749.0,134.7 747.1,138.8"/><polygon points="750.4,134.7 751.2,129.4 753.0,134.7 751.2,140.1"/><polygon points="754.7,134.7 755.5,119.9 758.0,134.7 755.5,141.1"/><polygon points="759.3,134.7 760.1,129.1 761.9,134.7 760.1,138.8"/><polygon points="762.8,134.7 763.6,120.3 766.6,134.7 763.6,177.0"/><polygon points="767.0,134.7 767.8,129.3 769.6,134.7 767.8,140.1"/><polygon points="771.8,134.7 772.6,114.1 775.6,134.7 772.6,168.5"/><polygon points="775.4,134.7 776.2,129.9 778.0,134.7 776.2,138.5"/><polygon points="780.2,134.7 781.0,119.9 783.5,134.7 781.0,141.4"/><polygon points="784.1,134.7 784.9,102.1 788.0,134.7 784.9,147.9"/><polygon points="788.1,134.7 788.9,120.7 791.4,134.7 788.9,140.7"/><polygon points="792.3,134.7 793.1,130.4 795.0,134.7 793.1,139.6"/><polygon points="796.7,134.7 797.5,119.3 800.6,134.7 797.5,165.2"/><polygon points="800.9,134.7 801.7,120.2 804.2,134.7 801.7,141.2"/><polygon points="805.7,134.7 806.5,106.2 809.6,134.7 806.5,145.7"/><polygon points="809.4,134.7 810.2,120.2 812.8,134.7 810.2,141.4"/><polygon points="813.1,134.7 813.9,129.9 815.7,134.7 813.9,139.3"/><polygon points="817.3,134.7 818.1,130.6 819.9,134.7 818.1,140.0"/><polygon points="822.0,134.7 822.8,124.1 825.4,134.7 822.8,142.0"/><polygon points="826.1,134.7 826.9,115.2 829.6,134.7 826.9,148.1"/><polygon points="830.8,134.7 831.6,117.2 834.7,134.7 831.6,164.8"/><polygon points="834.4,134.7 835.2,106.5 838.2,134.7 835.2,145.0"/><polygon points="838.9,134.7 839.7,115.6 842.7,134.7 839.7,171.7"/><polygon points="843.6,134.7 844.4,129.4 846.2,134.7 844.4,139.3"/><polygon points="847.3,134.7 848.1,121.8 850.6,134.7 848.1,141.4"/><polygon points="851.4,134.7 852.2,104.9 855.3,134.7 852.2,146.3"/><polygon points="856.2,134.7 857.0,122.5 859.6,134.7 857.0,141.9"/><polygon points="860.4,134.7 861.2,129.2 863.1,134.7 861.2,139.0"/><polygon points="864.6,134.7 865.4,117.2 868.5,134.7 865.4,176.0"/><polygon points="867.9,134.7 868.7,124.2 871.2,134.7 868.7,141.2"/><polygon points="872.2,134.7 873.0,112.1 876.1,134.7 873.0,144.1"/><polygon points="877.1,134.7 877.9,121.5 880.4,134.7 877.9,142.5"/><polygon points="881.2,134.7 882.0,130.6 883.9,134.7 882.0,139.8"/><polygon points="885.6,134.7 886.4,130.7 888.3,134.7 886.4,140.4"/><polygon points="889.9,134.7 890.7,123.8 893.2,134.7 890.7,141.1"/><polygon points="894.1,134.7 894.9,130.0 896.8,134.7 894.9,140.1"/><polygon points="897.7,134.7 898.5,120.0 901.5,134.7 898.5,171.0"/><polygon points="901.6,134.7 902.4,130.3 904.3,134.7 902.4,139.1"/><polygon points="905.6,134.7 906.4,116.0 909.4,134.7 906.4,171.6"/><polygon points="909.8,134.7 910.6,130.1 912.5,134.7 910.6,139.1"/><polygon points="914.6,134.7 915.4,121.7 917.9,134.7 915.4,140.1"/><polygon points="919.1,134.7 919.9,101.5 923.0,134.7 919.9,148.4"/><polygon points="922.7,134.7 923.5,124.4 926.0,134.7 923.5,140.1"/><polygon points="926.9,134.7 927.7,129.4 929.6,134.7 927.7,138.7"/><polygon points="931.9,134.7 932.7,118.2 935.7,134.7 932.7,175.6"/><polygon points="935.2,134.7 936.0,123.6 938.5,134.7 936.0,142.5"/><polygon points="940.0,134.7 940.8,106.3 943.9,134.7 940.8,144.1"/><polygon points="944.2,134.7 945.0,124.7 947.6,134.7 945.0,141.1"/><polygon points="948.7,134.7 949.5,130.8 951.4,134.7 949.5,139.7"/><polygon points="951.9,134.7 952.7,120.8 955.3,134.7 952.7,142.3"/><polygon points="957.1,134.7 957.9,119.2 960.6,134.7 957.9,147.7"/><polygon points="960.9,134.7 961.7,109.0 964.7,134.7 961.7,148.1"/><polygon points="964.6,134.7 965.4,119.3 968.4,134.7 965.4,171.2"/><polygon points="968.8,134.7 969.6,110.2 972.6,134.7 969.6,144.5"/></svg>

<!-- midi region -->
<div class="a" style="left:436.3px;top:182.3px;width:200px;height:106px;background:#237b35;border-radius:3px"></div>
<div class="a" style="left:440.5px;top:184.2px;font-size:9.8px;color:#e2f2da;line-height:11px;-webkit-text-stroke:0.2px #e2f2da">Steingraeber Prelude</div>
<svg class="a" style="left:0;top:0" width="1280" height="300"><rect x="442.3" y="229.0" width="1.2" height="59.0" fill="#1b5f27"/><rect x="448.5" y="222.0" width="1.2" height="66.0" fill="#1b5f27"/><rect x="465.1" y="225.0" width="1.2" height="63.0" fill="#1b5f27"/><rect x="480.3" y="213.0" width="1.2" height="75.0" fill="#1b5f27"/><rect x="486.5" y="204.0" width="1.2" height="84.0" fill="#1b5f27"/><rect x="490.0" y="200.0" width="1.2" height="88.0" fill="#1b5f27"/><rect x="497.5" y="204.0" width="1.2" height="84.0" fill="#1b5f27"/><rect x="506.5" y="229.0" width="1.2" height="59.0" fill="#1b5f27"/><rect x="511.1" y="214.0" width="1.2" height="74.0" fill="#1b5f27"/><rect x="527.5" y="209.0" width="1.2" height="79.0" fill="#1b5f27"/><rect x="548.2" y="214.0" width="1.2" height="74.0" fill="#1b5f27"/><rect x="555.5" y="204.0" width="1.2" height="84.0" fill="#1b5f27"/><rect x="567.5" y="213.0" width="1.2" height="75.0" fill="#1b5f27"/><rect x="571.5" y="238.0" width="1.2" height="50.0" fill="#1b5f27"/><rect x="575.1" y="229.0" width="1.2" height="59.0" fill="#1b5f27"/><rect x="436.0" y="203.3" width="51.0" height="1.8" fill="#a6d9a6"/><rect x="502.0" y="203.3" width="52.0" height="1.8" fill="#a6d9a6"/><rect x="570.0" y="203.3" width="15.0" height="1.8" fill="#a6d9a6"/><rect x="436.0" y="220.1" width="51.0" height="1.8" fill="#a6d9a6"/><rect x="502.0" y="220.1" width="52.0" height="1.8" fill="#a6d9a6"/><rect x="570.0" y="220.1" width="15.0" height="1.8" fill="#a6d9a6"/><rect x="436.0" y="241.2" width="51.0" height="1.8" fill="#a6d9a6"/><rect x="502.0" y="241.2" width="52.0" height="1.8" fill="#a6d9a6"/><rect x="570.0" y="241.2" width="15.0" height="1.8" fill="#a6d9a6"/><rect x="490.0" y="199.9" width="9.0" height="1.8" fill="#a6d9a6"/><rect x="557.0" y="199.9" width="9.0" height="1.8" fill="#a6d9a6"/><rect x="490.0" y="211.8" width="9.0" height="1.8" fill="#a6d9a6"/><rect x="557.0" y="211.8" width="9.0" height="1.8" fill="#a6d9a6"/><rect x="490.0" y="232.9" width="9.0" height="1.8" fill="#a6d9a6"/><rect x="557.0" y="232.9" width="9.0" height="1.8" fill="#a6d9a6"/><rect x="490.0" y="211.8" width="11.0" height="1.8" fill="#a6d9a6"/><rect x="557.0" y="211.8" width="12.0" height="1.8" fill="#a6d9a6"/><rect x="485.0" y="245.1" width="6.0" height="1.8" fill="#a6d9a6"/><rect x="552.0" y="245.1" width="7.0" height="1.8" fill="#a6d9a6"/><rect x="444.0" y="253.7" width="7.0" height="1.8" fill="#a6d9a6"/><rect x="460.0" y="253.7" width="5.0" height="1.8" fill="#a6d9a6"/><rect x="477.0" y="253.7" width="8.0" height="1.8" fill="#a6d9a6"/><rect x="492.0" y="253.7" width="9.0" height="1.8" fill="#a6d9a6"/><rect x="510.0" y="253.7" width="7.0" height="1.8" fill="#a6d9a6"/><rect x="527.0" y="253.7" width="7.0" height="1.8" fill="#a6d9a6"/><rect x="544.5" y="253.7" width="6.5" height="1.8" fill="#a6d9a6"/><rect x="560.5" y="253.7" width="8.5" height="1.8" fill="#a6d9a6"/><rect x="578.0" y="253.7" width="8.0" height="1.8" fill="#a6d9a6"/><rect x="452.6" y="262.1" width="7.1" height="1.8" fill="#a6d9a6"/><rect x="468.0" y="262.1" width="9.0" height="1.8" fill="#a6d9a6"/><rect x="518.0" y="262.1" width="7.0" height="1.8" fill="#a6d9a6"/><rect x="535.0" y="262.1" width="9.5" height="1.8" fill="#a6d9a6"/><rect x="437.0" y="283.1" width="6.6" height="1.8" fill="#a6d9a6"/><rect x="501.6" y="283.1" width="7.4" height="1.8" fill="#a6d9a6"/><rect x="569.0" y="283.1" width="8.0" height="1.8" fill="#a6d9a6"/><rect x="437.0" y="274.7" width="2.0" height="1.8" fill="#a6d9a6"/></svg>

<!-- playhead -->
<div class="a" style="left:434.8px;top:58px;width:1.2px;height:622px;background:#f0f0f0"></div>
<svg class="a" style="left:428.5px;top:56.5px" width="14" height="14"><polygon points="1.3,1 12.3,1 12.3,6 6.8,11.8 1.3,6" fill="#e6e6e6" stroke="#1a1a1a" stroke-width="0.9"/><path d="M6.8,3 V12" stroke="#fafafa" stroke-width="1"/></svg>

<!-- dialog -->
<div class="a" id="dlg" style="left:580px;top:156px;width:599px;height:455px;border-radius:5px;background:#d5d5d5;box-shadow:0 18px 34px -4px rgba(0,0,0,.6),0 0 0 0.5px rgba(0,0,0,.5);overflow:hidden">
  <div class="a" style="left:0;top:0;width:599px;height:132px;background:linear-gradient(#e6e6e6,#d3d3d3 18%,#d3d3d3)"></div>
  <div class="a" style="left:6.6px;top:4.3px;width:10px;height:10px;border-radius:50%;background:#d3d3d3;box-shadow:inset 0 0 0 0.6px #bdbdbd"></div>
  <div class="a" style="left:23.2px;top:4.3px;width:10px;height:10px;border-radius:50%;background:#d3d3d3;box-shadow:inset 0 0 0 0.6px #bdbdbd"></div>
  <div class="a" style="left:40.1px;top:4.3px;width:10px;height:10px;border-radius:50%;background:#34c84a;box-shadow:inset 0 0 0 0.6px #2aa33c"></div>
  <div class="dt" style="left:212.5px;top:3px;color:#333">Song auf Festplatte exportieren ...</div>
  <div class="dt" style="left:143.5px;top:41px">Sichern unter:</div>
  <div class="a" style="left:217px;top:36px;width:189.5px;height:23px;border-radius:3.5px;background:#80aee8"></div>
  <div class="a" style="left:220px;top:39px;width:184px;height:17px;background:#fff"></div>
  <div class="dt" style="left:223px;top:41px;letter-spacing:-0.08px"><span style="background:#c9c9c9;padding:0 0 0 0">Analog Impro - 03.05.19, 21.48</span></div>
  <div class="btn" style="left:412px;top:40px;width:16px;height:16px"></div>
  <svg class="a" style="left:412px;top:40px" width="16" height="16"><path d="M5,9.5 L8,6.5 L11,9.5" stroke="#333" stroke-width="1.3" fill="none"/></svg>
  <div class="dt" style="left:188.5px;top:66px">Tags:</div>
  <div class="a" style="left:219.5px;top:63.5px;width:184.5px;height:18px;background:#fff;box-shadow:0 0 0 0.6px #a8a8a8"></div>
  <div class="a" style="left:0;top:89px;width:599px;height:1px;background:#c2c2c2"></div>
  <!-- toolbar -->
  <div class="btn" style="left:9.7px;top:106px;width:21.5px;height:17px"></div>
  <div class="btn" style="left:32px;top:106px;width:21.5px;height:17px"></div>
  <svg class="a" style="left:9px;top:106px" width="46" height="17"><path d="M13.5,3.5 L9,8.5 L13.5,13.5" stroke="#9a9a9a" stroke-width="1.2" fill="none"/><path d="M32.5,3.5 L37,8.5 L32.5,13.5" stroke="#9a9a9a" stroke-width="1.2" fill="none"/></svg>
  <div class="btn" style="left:60.3px;top:106px;width:69.7px;height:17px"></div>
  <div class="a" style="left:81px;top:106px;width:1px;height:17px;background:#d0d0d0"></div>
  <div class="a" style="left:108px;top:105.5px;width:22px;height:18px;border-radius:0 4px 4px 0;background:#646464"></div>
  <svg class="a" style="left:60px;top:106px" width="72" height="17">
    <g fill="none" stroke="#555" stroke-width="1"><rect x="7.5" y="4.5" width="3" height="3" rx="1"/><rect x="12.5" y="4.5" width="3" height="3" rx="1"/><rect x="7.5" y="9.5" width="3" height="3" rx="1"/><rect x="12.5" y="9.5" width="3" height="3" rx="1"/></g>
    <path d="M29,4.5 H41 M29,7 H41 M29,9.5 H41 M29,12 H41" stroke="#555" stroke-width="1"/>
    <rect x="51.5" y="4.5" width="12" height="8" fill="none" stroke="#fff" stroke-width="1.2"/><path d="M55.5,4.5 V12.5 M59.5,4.5 V12.5" stroke="#fff" stroke-width="1.2"/>
  </svg>
  <div class="btn" style="left:138px;top:106px;width:33px;height:17px"></div>
  <svg class="a" style="left:138px;top:106px" width="33" height="17">
    <rect x="6" y="3.5" width="11" height="10" fill="#888" opacity=".35"/>
    <g fill="none" stroke="#555" stroke-width="0.9"><rect x="6.5" y="5" width="2.5" height="3"/><rect x="10.5" y="5" width="2.5" height="3"/><rect x="14.5" y="5" width="2.5" height="3"/><rect x="6.5" y="10" width="2.5" height="3"/><rect x="10.5" y="10" width="2.5" height="3"/><rect x="14.5" y="10" width="2.5" height="3"/></g>
    <path d="M20.5,7.5 L23,10 L25.5,7.5" stroke="#444" stroke-width="1.1" fill="none"/>
  </svg>
  <div class="btn" style="left:213.8px;top:106px;width:172.2px;height:17px"></div>
  <svg class="a" style="left:219px;top:108px" width="14" height="13"><path d="M0.5,2 H5 L6,3.5 H13 V12 H0.5 Z" fill="#5ab0f0"/><rect x="1.5" y="4.5" width="10.5" height="6.5" fill="#7ec6f8" stroke="#3d97db" stroke-width="0.5"/></svg>
  <div class="dt" style="left:236px;top:107.5px;color:#4a4a4a">Schreibtisch</div>
  <svg class="a" style="left:374px;top:107px" width="10" height="16"><path d="M2.5,5.5 L5,3 L7.5,5.5 M2.5,10 L5,12.5 L7.5,10" stroke="#444" stroke-width="1" fill="none"/></svg>
  <div class="btn" style="left:395.5px;top:105.4px;width:194.5px;height:18.8px"></div>
  <svg class="a" style="left:457px;top:108px" width="14" height="14"><circle cx="5.5" cy="5.5" r="4" stroke="#777" stroke-width="1.2" fill="none"/><path d="M8.5,8.5 L12,12" stroke="#777" stroke-width="1.4"/></svg>
  <div class="dt" style="left:473px;top:108px;color:#7f7f7f">Suchen</div>
  <div class="a" style="left:0;top:131.5px;width:599px;height:1px;background:#bdbdbd"></div>
  <!-- browser -->
  <div class="a" style="left:0;top:132.5px;width:167.5px;height:167px;background:#eeeeee"></div>
  <div class="a" style="left:0;top:176px;width:167px;height:19.6px;background:#cacaca"></div>
  <div class="a" style="left:167.5px;top:132.5px;width:431.5px;height:167px;background:#fff"></div>
  <div class="a" style="left:167px;top:132.5px;width:1px;height:167px;background:#dcdcdc"></div>
  <div class="a" style="left:340px;top:132.5px;width:1px;height:167px;background:#e6e6e6"></div>
  <div class="dt" style="left:7.6px;top:140px;font-size:10px;color:#808080">Favoriten</div>
  <div class="dt" style="left:35.2px;top:157.5px;color:#404040">Programme</div>
  <div class="dt" style="left:35.2px;top:179.5px;color:#262626">Schreibtisch</div>
  <div class="dt" style="left:35.2px;top:201px;color:#404040">Dokumente</div>
  <div class="dt" style="left:35.2px;top:222.5px;color:#404040">Downloads</div>
  <div class="dt" style="left:7.6px;top:251px;font-size:10px;color:#808080">Netzwerk</div>
  <svg class="a" style="left:14px;top:155px" width="18" height="90">
    <path d="M2,16 L8.5,2 L15,16 M4.5,11 H13 M1,12 L4,9 M17,12 L14,9" stroke="#666" stroke-width="1.1" fill="none"/>
    <rect x="1.5" y="26" width="14.5" height="11" rx="1" fill="none" stroke="#555" stroke-width="1.2"/><rect x="2.1" y="28.5" width="13.3" height="8" fill="#777" opacity=".5"/><path d="M5,34.5 H12.5" stroke="#eee" stroke-width="0.6" stroke-dasharray="1 1"/>
    <path d="M2.5,48 H8.5 L11.5,51 V61 H2.5 Z" fill="#f3f3f3" stroke="#777" stroke-width="0.9"/><path d="M6,45 H11 L14.5,48.5 V57.5 H11.5" stroke="#777" stroke-width="0.9" fill="#f3f3f3"/>
    <circle cx="8.5" cy="74.2" r="7.5" fill="#707070"/><path d="M8.5,69.5 V77.5 M5.3,74.3 L8.5,77.8 L11.7,74.3" stroke="#fff" stroke-width="1.9" fill="none"/>
  </svg>
  <svg class="a" style="left:174px;top:137px" width="13" height="8"><rect x="0.5" y="0.5" width="12" height="7" fill="#9a9a9a"/><rect x="1" y="2" width="11" height="5" fill="#b5b5b5"/></svg>
  <div class="dt" style="left:191.5px;top:135.5px;font-size:10.6px;color:#7a7a7a">Analog Impro</div>
  <div class="a" style="left:0;top:299.5px;width:599px;height:1px;background:#c9c9c9"></div>
  <!-- accessory -->
  <div class="a" style="left:8.5px;top:309px;width:582px;height:111px;border-radius:4px;background:#cbcbcb;box-shadow:inset 0 0 0 0.5px #c2c2c2"></div>
  <div class="radio" style="left:182.2px;top:330px"></div>
  <div class="radio" style="left:263.8px;top:330px"></div>
  <div class="a" style="left:345px;top:330px;width:13px;height:13px;border-radius:50%;background:linear-gradient(#6cb0f8,#3d8ef0)"></div>
  <div class="a" style="left:349.2px;top:334.2px;width:4.6px;height:4.6px;border-radius:50%;background:#fff"></div>
  <div class="radio" style="left:426.7px;top:330px"></div>
  <div class="dt" style="left:198px;top:329px">AAC</div>
  <div class="dt" style="left:279px;top:329px">MP3</div>
  <div class="dt" style="left:361px;top:329px">AIFF</div>
  <div class="dt" style="left:442.7px;top:329px">WAVE</div>
  <div class="dt" style="left:129.7px;top:355px">Qualität</div>
  <div class="a" style="left:183px;top:377px;width:13px;height:13px;border-radius:3px;background:#fff;box-shadow:0 0 0 0.5px #b0b0b0"></div>
  <div class="dt" style="left:199px;top:377.5px">y</div><div class="dt" style="left:315px;top:377.5px">g</div><div class="dt" style="left:371px;top:377.5px">g</div>
  <div class="a" style="left:178px;top:354px;width:277px;height:17.8px;border-radius:4px;background:linear-gradient(#5e9cf2,#2a6fe0)"></div>
  <svg class="a" style="left:447px;top:356px" width="8" height="16"><path d="M2,6 L4,3.5 L6,6 M2,10 L4,12.5 L6,10" stroke="#e8f0ff" stroke-width="1" fill="none"/></svg>
  <div class="a" style="left:170px;top:352.6px;width:279px;height:36px;border-radius:4px;background:#f2f2f2;box-shadow:0 2px 6px rgba(0,0,0,.3),0 0 0 0.5px rgba(0,0,0,.15)"></div>
  <div class="a" style="left:170px;top:356.2px;width:279px;height:14.7px;background:#2a6ad9"></div>
  <svg class="a" style="left:173px;top:357px" width="12" height="12"><path d="M2,6.5 L4.5,9.5 L9,2.5" stroke="#fff" stroke-width="1.6" fill="none"/></svg>
  <div class="dt" style="left:188px;top:356px;color:#fff">Unkomprimiertes 16-Bit (CD-Qualität)</div>
  <div class="dt" style="left:188px;top:371px;color:#333">Unkomprimiertes 24-Bit</div>
  <div class="dt" style="left:196.2px;top:392px">Regionen (wenn „Cycle“ deaktiviert ist) exportieren</div>
  <!-- buttons -->
  <div class="btn" style="left:19.5px;top:429.6px;width:86.7px;height:16.7px">Neuer Ordner</div>
  <div class="btn" style="left:423.7px;top:429.6px;width:78.5px;height:16.7px">Abbrechen</div>
  <div class="btn" style="left:508px;top:429px;width:82.7px;height:17.7px;background:linear-gradient(#6aaef8,#2d7cf0);color:#fff;box-shadow:0 0 0 0.5px #3a7ee0">Exportieren</div>
</div>

</body></html>
